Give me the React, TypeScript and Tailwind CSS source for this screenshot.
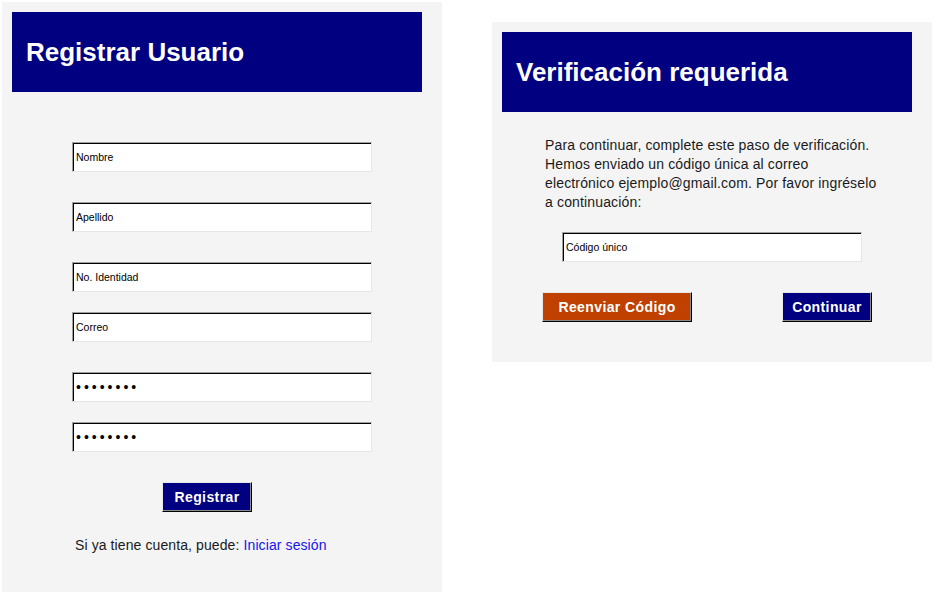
const font = { fontFamily: '"Liberation Sans", Arial, sans-serif' };

const inputCls =
  'block w-[300px] h-[30px] px-[3px] text-[10.5px] text-black bg-white outline-none border border-t-[#a0a0a0] border-l-[#a0a0a0] border-r-[#e6e6e6] border-b-[#e6e6e6] shadow-[inset_1px_1px_0_#000]';

const buttonCls =
  'h-[30px] text-[14px] font-bold tracking-[0.4px] text-white border border-t-[#e8e8e8] border-l-[#e8e8e8] border-r-black border-b-black shadow-[inset_-1px_-1px_0_#8a8a8a]';

function Field({ value, password, className }: { value: string; password?: boolean; className: string }) {
  return (
    <input
      readOnly
      type={password ? 'password' : 'text'}
      value={value}
      className={`${inputCls} ${password ? 'text-[14px] tracking-[3px]' : ''} ${className}`}
      style={font}
    />
  );
}

function Header({ title }: { title: string }) {
  return (
    <div className="m-[10px] w-[410px] h-[80px] bg-[#000080] flex items-center pl-[14px]">
      <h1 className="text-[26px] font-bold text-white leading-none">{title}</h1>
    </div>
  );
}

export default function App() {
  return (
    <div className="min-h-screen bg-white flex items-start gap-[50px] pl-[2px] pt-[2px]" style={font}>
      {/* Registro */}
      <div className="w-[440px] h-[590px] bg-[#f4f4f4] flex flex-col">
        <Header title="Registrar Usuario" />
        <div className="flex flex-col items-center">
          <Field value="Nombre" className="mt-[40px]" />
          <Field value="Apellido" className="mt-[30px]" />
          <Field value="No. Identidad" className="mt-[30px]" />
          <Field value="Correo" className="mt-[20px]" />
          <Field value="12345678" password className="mt-[30px]" />
          <Field value="12345678" password className="mt-[20px]" />
        </div>
        <button className={`${buttonCls} bg-[#000080] w-[90px] mt-[30px] ml-[160px]`}>Registrar</button>
        <p className="mt-[24px] ml-[73px] text-[14px] leading-[18px] tracking-[0.1px] text-[#1a1a1a]">
          Si ya tiene cuenta, puede:{' '}
          <a href="#" className="text-[#1414f0]">
            Iniciar sesión
          </a>
        </p>
      </div>

      {/* Verificación */}
      <div className="w-[440px] h-[340px] mt-[20px] bg-[#f4f4f4] flex flex-col">
        <Header title="Verificación requerida" />
        <p className="mt-[14px] ml-[53px] w-[334px] text-[14px] leading-[19px] tracking-[0.15px] text-[#1a1a1a]">
          Para continuar, complete este paso de verificación. Hemos enviado un código única al correo electrónico
          ejemplo@gmail.com. Por favor ingréselo a continuación:
        </p>
        <div className="flex justify-center">
          <Field value="Código único" className="mt-[20px]" />
        </div>
        <div className="flex mt-[30px] pl-[50px]">
          <button className={`${buttonCls} bg-[#c04000] w-[150px]`}>Reenviar Código</button>
          <button className={`${buttonCls} bg-[#000080] w-[90px] ml-[90px]`}>Continuar</button>
        </div>
      </div>
    </div>
  );
}
